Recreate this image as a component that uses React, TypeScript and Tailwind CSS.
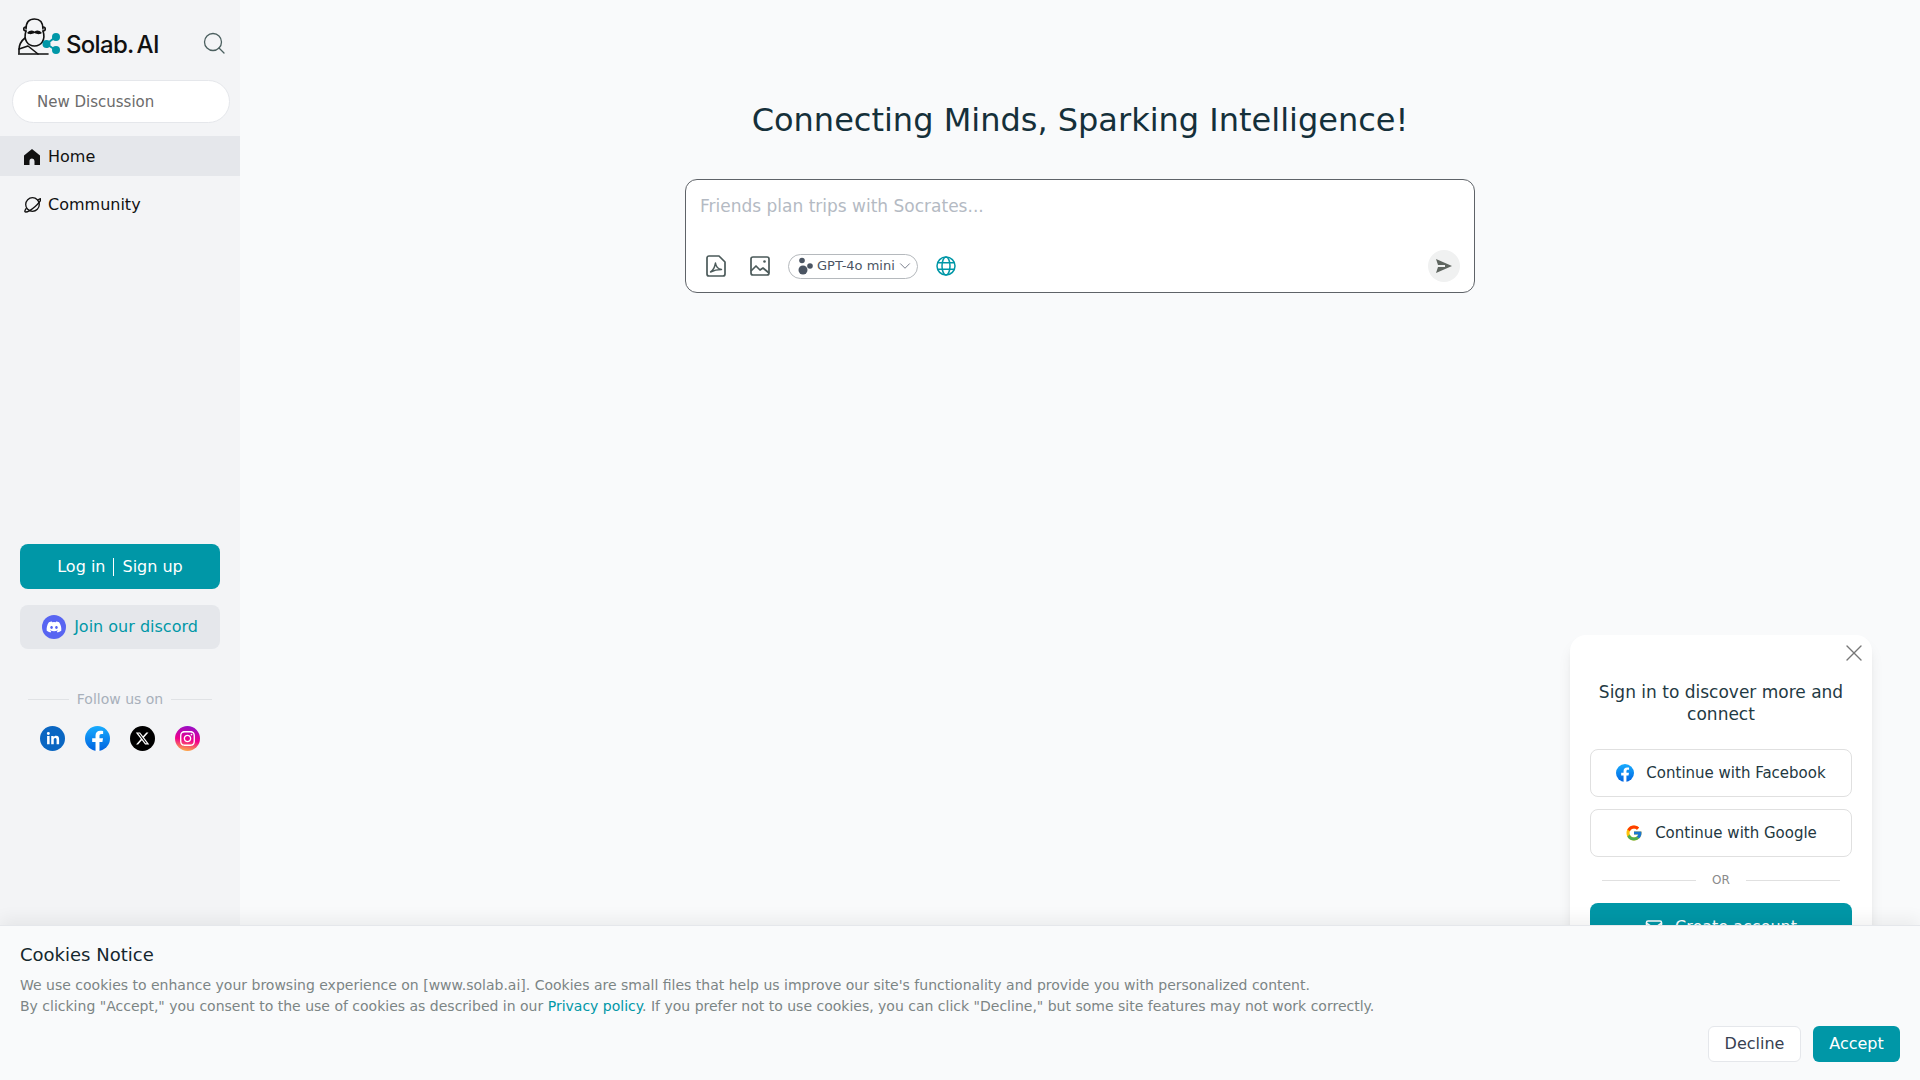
import { ChevronDown, Mail, X } from "lucide-react"
import { FaDiscord, FaInstagram, FaLinkedinIn } from "react-icons/fa"
import { FaXTwitter } from "react-icons/fa6"
import { FcGoogle } from "react-icons/fc"

function Logo() {
  return (
    <svg width="44" height="38" viewBox="0 0 44 38" fill="none">
      <g stroke="#111" strokeWidth="1.600" strokeLinecap="round" strokeLinejoin="round">
        <path d="M8 11C8 4 11 1 16.500 1S25 4 25 11" />
        <path d="M8 9C5 9 5 13 8 13M25 9c3 0 3 4 0 4" />
        <path d="M8 13C5 22 10 28 16.500 28S28 22 25 13" />
        <path d="M7 20C3 23 1 28 1 32v3" />
        <path d="M1 31l9-3 10 8" />
        <path d="M0 36h30" />
        <path d="M25 24l4 5" />
      </g>
      <path d="M9 15c3-3 5-3 7.500-1.500C19 12 21 12 24 15c-3 2-5 1-7.500 0-2.500 1-4.500 2-7.500 0z" fill="#111" />
      <g stroke="#0097a7" strokeWidth="2">
        <path d="M28.500 26l9-7M28.500 26l9 6" />
      </g>
      <circle cx="28.500" cy="26" r="4" fill="#0097a7" />
      <circle cx="38" cy="19" r="4" fill="#0097a7" />
      <circle cx="38" cy="32" r="4" fill="#0097a7" />
    </svg>
  )
}

function SearchIcon() {
  return (
    <svg width="22" height="22" viewBox="0 0 22 22" fill="none" stroke="#4b5f5f" strokeWidth="1.300" strokeLinecap="round">
      <circle cx="10" cy="10" r="8.500" />
      <path d="M16 16l5 5" />
    </svg>
  )
}

function HomeIcon() {
  return (
    <svg width="18" height="18" viewBox="0 0 18 18" fill="#111">
      <path d="M9 1L1 7.500V17h5.500v-4a2.500 2.500 0 0 1 5 0v4H17V7.500z" />
    </svg>
  )
}

function PlanetIcon() {
  return (
    <svg width="18" height="18" viewBox="0 0 18 18" fill="none" stroke="#111" strokeWidth="1.300" strokeLinecap="round">
      <circle cx="9.500" cy="8.500" r="6.800" />
      <path d="M15 4c1.500-1.300 2.500-1.500 2.700-1.100.4.800-1.500 4-5.500 7.500-4.200 3.600-8.500 6-10 5.500-.7-.3-.5-1.500 1-3.400" />
    </svg>
  )
}

function PdfIcon() {
  return (
    <svg width="20" height="22" viewBox="0 0 20 22" fill="none" stroke="#4b5a5a" strokeWidth="1.700" strokeLinejoin="round">
      <path d="M3 1h10l6 6v12a2 2 0 0 1-2 2H3a2 2 0 0 1-2-2V3a2 2 0 0 1 2-2z" />
      <path d="M4.500 17c2-1 4-4 5-9 .5 4 2.500 6 6 6.500-4 0-8 1-11 2.500z" strokeWidth="1.400" />
    </svg>
  )
}

function ImageIcon() {
  return (
    <svg width="20" height="20" viewBox="0 0 20 20" fill="none" stroke="#4b5a5a" strokeWidth="1.700" strokeLinejoin="round">
      <rect x="1" y="1" width="18" height="18" rx="2" />
      <circle cx="14.500" cy="5.500" r="1.300" fill="#4b5a5a" stroke="none" />
      <path d="M1 15l5-5 4 4 3-2 6 5" />
    </svg>
  )
}

function ModelIcon() {
  return (
    <svg width="16" height="18" viewBox="0 0 16 18" fill="#4b5563">
      <circle cx="5" cy="3.500" r="2.800" />
      <circle cx="13" cy="9" r="2.800" />
      <circle cx="6" cy="13" r="4.500" />
    </svg>
  )
}

function GlobeIcon() {
  return (
    <svg width="20" height="20" viewBox="0 0 20 20" fill="none" stroke="#0097a7" strokeWidth="1.500">
      <circle cx="10" cy="10" r="9" />
      <ellipse cx="10" cy="10" rx="4" ry="9" />
      <path d="M2 6.800h16M2 13.200h16" />
    </svg>
  )
}

function SendIcon() {
  return (
    <svg width="16" height="14" viewBox="0 0 16 14" fill="#5f6660">
      <path d="M0 0l16 7-16 7 2-6h7V6H2z" />
    </svg>
  )
}

function FacebookIcon({ size }: { size: number }) {
  return (
    <svg width={size} height={size} viewBox="0 0 24 24">
      <defs>
        <linearGradient id={`fb${size}`} x1="0" y1="0" x2="0" y2="1">
          <stop offset="0" stopColor="#18acfe" />
          <stop offset="1" stopColor="#0163e0" />
        </linearGradient>
      </defs>
      <circle cx="12" cy="12" r="12" fill={`url(#fb${size})`} />
      <path d="M16.700 15.300l.6-3.500h-3.400V9.600c0-1 .5-1.900 2-1.900h1.500v-3c-.9-.1-1.800-.2-2.700-.2-2.800 0-4.600 1.700-4.600 4.700v2.600H6.900v3.500h3.200V24h3.800v-8.700z" fill="#fff" />
    </svg>
  )
}

function NavItem({ icon, label, active }: { icon: React.ReactNode; label: string; active?: boolean }) {
  return (
    <div className={`flex h-10 items-center gap-[7px] pt-px pl-[23px] text-base text-[#111] ${active ? "bg-[#e5e7eb]" : ""}`}>
      {icon}
      <span>{label}</span>
    </div>
  )
}

function Sidebar() {
  return (
    <aside className="flex h-full w-[240px] shrink-0 flex-col bg-[#f3f4f6]">
      <div className="flex h-[80px] items-start pl-[18px] pr-[15px] pt-[18px]">
        <Logo />
        <span className="mt-[12px] ml-1 font-['Inter'] text-[24px] leading-[30px] font-medium tracking-[-0.7px] text-[#111]">
          Solab<span className="mr-[3px]">.</span>AI
        </span>
        <div className="ml-auto mt-[14px]">
          <SearchIcon />
        </div>
      </div>
      <div className="mx-3 flex h-[43px] w-[218px] items-center rounded-full border border-[#e5e7eb] bg-white pt-px pl-6 text-[15px] text-[#6b6b6b]">
        New Discussion
      </div>
      <div className="mt-[13px]">
        <NavItem icon={<HomeIcon />} label="Home" active />
      </div>
      <div className="mt-2">
        <NavItem icon={<PlanetIcon />} label="Community" />
      </div>

      <div className="mx-5 mt-[320px] flex h-[45px] items-center justify-center rounded-lg bg-[#0097a7] text-base text-white">
        <span>Log in</span>
        <span className="mx-2 h-[18px] w-px bg-white" />
        <span>Sign up</span>
      </div>
      <div className="mx-5 mt-4 flex h-11 items-center justify-center gap-2 rounded-lg bg-[#e5e7eb] text-base text-[#0097a7]">
        <span className="flex h-6 w-6 items-center justify-center rounded-full bg-[#5865f2]">
          <FaDiscord className="text-white" size={16} />
        </span>
        Join our discord
      </div>

      <div className="mx-7 mt-[40px] flex items-center gap-2 text-sm text-[#a8b0bb]">
        <div className="h-px flex-1 bg-[#e0e2e5]" />
        Follow us on
        <div className="h-px flex-1 bg-[#e0e2e5]" />
      </div>
      <div className="mt-[17px] flex justify-center gap-5">
        <span className="flex h-[25px] w-[25px] items-center justify-center rounded-full bg-[#0a66c2]">
          <FaLinkedinIn className="text-white" size={14} />
        </span>
        <FacebookIcon size={25} />
        <span className="flex h-[25px] w-[25px] items-center justify-center rounded-full bg-black">
          <FaXTwitter className="text-white" size={15} />
        </span>
        <span className="flex h-[25px] w-[25px] items-center justify-center rounded-full bg-[linear-gradient(190deg,#8a10d0,#f0008c_55%,#ffc83c)]">
          <FaInstagram className="text-white" size={17} />
        </span>
      </div>
    </aside>
  )
}

function Composer() {
  return (
    <div className="mt-[37px] flex h-[114px] w-[790px] flex-col rounded-xl border border-[#5f6368] bg-white px-[14px]">
      <div className="mt-[14px] text-[17px] leading-6 text-[#b4bac3]">Friends plan trips with Socrates...</div>
      <div className="mt-[32px] flex items-center">
        <div className="ml-[6px]">
          <PdfIcon />
        </div>
        <div className="ml-6">
          <ImageIcon />
        </div>
        <div className="ml-[18px] flex h-[25px] w-[130px] items-center rounded-full border border-[#b5b9bd] pl-[8px] text-[13px] text-[#4b5563]">
          <ModelIcon />
          <span className="ml-1">GPT-4o mini</span>
          <ChevronDown className="ml-px text-[#6b7280]" size={18} strokeWidth={1.200} />
        </div>
        <div className="ml-[18px]">
          <GlobeIcon />
        </div>
        <div className="ml-auto flex h-8 w-8 items-center justify-center rounded-full bg-[#f0f1f1]">
          <SendIcon />
        </div>
      </div>
    </div>
  )
}

function SignInCard() {
  return (
    <div className="absolute top-[635px] left-[1570px] w-[302px] rounded-2xl bg-white px-5 pt-[46px] pb-6 shadow-lg">
      <X className="absolute top-1 right-1 text-[#777]" size={28} strokeWidth={1.200} />
      <div className="text-center text-[17px] leading-[22px] text-[#1f3a44]">Sign in to discover more and connect</div>
      <div className="mt-[24px] flex h-12 items-center justify-center gap-3 rounded-lg border border-[#e0e0e0] text-[15px] text-[#23383f]">
        <FacebookIcon size={18} />
        Continue with Facebook
      </div>
      <div className="mt-3 flex h-12 items-center justify-center gap-3 rounded-lg border border-[#e0e0e0] text-[15px] text-[#23383f]">
        <FcGoogle size={18} />
        Continue with Google
      </div>
      <div className="mt-[15px] flex items-center gap-4 px-3 text-xs text-[#8a8a8a]">
        <div className="h-px flex-1 bg-[#e0e0e0]" />
        OR
        <div className="h-px flex-1 bg-[#e0e0e0]" />
      </div>
      <div className="mt-[15px] flex h-12 items-center justify-center gap-3 rounded-lg bg-[#0097a7] text-base text-white">
        <Mail size={18} />
        Create account
      </div>
    </div>
  )
}

function CookieBanner() {
  return (
    <div className="absolute right-0 bottom-0 left-0 h-[155px] border-t border-[#e5e7eb] bg-[#f9fafb] px-5 pt-[17px] shadow-[0_-6px_16px_rgba(0,0,0,0.06)]">
      <div className="text-lg leading-6 text-[#15272e]">Cookies Notice</div>
      <div className="mt-2 text-sm leading-[21px] text-[#7c8585]">
        <div>
          We use cookies to enhance your browsing experience on [www.solab.ai]. Cookies are small files that help us improve our site's functionality and provide you with personalized content.
        </div>
        <div>
          By clicking "Accept," you consent to the use of cookies as described in our{" "}
          <span className="text-[#0097a7]">Privacy policy</span>. If you prefer not to use cookies, you can click "Decline," but some site features may not work correctly.
        </div>
      </div>
      <div className="absolute right-5 bottom-[18px] flex gap-3">
        <div className="flex h-9 w-[93px] items-center justify-center rounded-md border border-[#e5e7eb] bg-white text-base text-[#374151]">
          Decline
        </div>
        <div className="flex h-9 w-[87px] items-center justify-center rounded-md bg-[#0097a7] text-base text-white">
          Accept
        </div>
      </div>
    </div>
  )
}

export default function App() {
  return (
    <div className="relative flex h-screen w-full overflow-hidden bg-[#f9fafb] font-['DejaVu_Sans',sans-serif]">
      <Sidebar />
      <main className="flex flex-1 flex-col items-center pt-[98px]">
        <h1 className="text-[32px] leading-[44px] text-[#15303a]">Connecting Minds, Sparking Intelligence!</h1>
        <Composer />
      </main>
      <SignInCard />
      <CookieBanner />
    </div>
  )
}
